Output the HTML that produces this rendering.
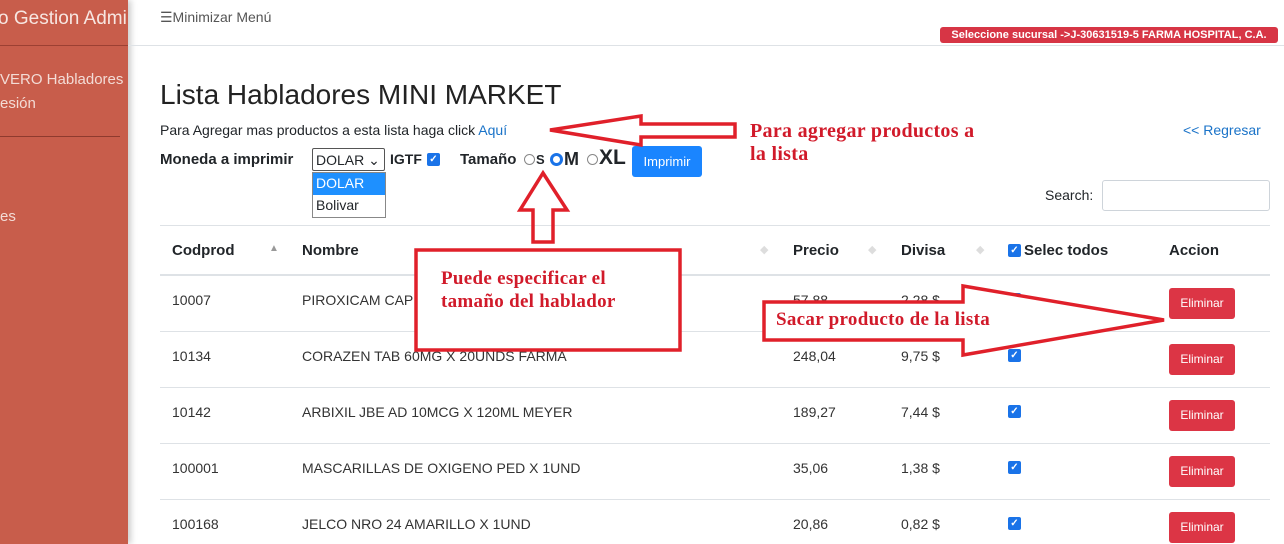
<!DOCTYPE html>
<html><head><meta charset="utf-8"><style>
*{box-sizing:border-box;margin:0;padding:0}
body{width:1284px;height:544px;overflow:hidden;background:#fff;font-family:"Liberation Sans",sans-serif;color:#212529;position:relative}
.a{position:absolute;white-space:nowrap}
#sb{position:absolute;left:0;top:0;width:128px;height:544px;background:#c85d4b;box-shadow:3px 0 6px rgba(0,0,0,.2);overflow:hidden;color:#f3dcd6}
.hl{position:absolute;left:160px;width:1110px;height:1px;background:#dee2e6}
.th{font-weight:bold;font-size:15px;top:242px}
.td{font-size:14px;color:#333}
.btn{position:absolute;left:1169px;width:66px;height:31px;background:#dc3545;color:#fff;font-size:12px;border-radius:3px;text-align:center;line-height:31px}
.cb{position:absolute;width:13px;height:13px;background:#1a73e8;border-radius:2px;color:#fff;font-size:10px;line-height:13px;text-align:center;font-weight:bold}
.red{color:#d11a2a;font-family:"Liberation Serif",serif;font-weight:bold;font-size:20px;letter-spacing:0.3px}
</style></head><body>
<div id="sb">
<div class="a" style="left:-2px;top:8px;font-size:19px;color:#f7e6e1">o Gestion Admin</div>
<div style="position:absolute;left:0;top:45px;width:128px;height:1px;background:#9c4033"></div>
<div class="a" style="left:0;top:71px;font-size:15px">VERO Habladores</div>
<div class="a" style="left:0;top:95px;font-size:15px">esión</div>
<div style="position:absolute;left:0;top:136px;width:120px;height:1px;background:#8e3a2e"></div>
<div class="a" style="left:0;top:208px;font-size:15px">es</div>
</div>
<div class="a" style="left:160px;top:9px;font-size:14px;color:#555">☰Minimizar Menú</div>
<div style="position:absolute;left:128px;top:45px;width:1156px;height:1px;background:#dee2e6"></div>
<div class="a" style="left:940px;top:27px;width:338px;height:16px;background:#d73545;color:#fff;font-size:11px;font-weight:bold;border-radius:3px;text-align:center;line-height:16px;font-family:'Liberation Sans Narrow','Liberation Sans',sans-serif">Seleccione sucursal -&gt;J-30631519-5 FARMA HOSPITAL, C.A.</div>
<div class="a" style="left:160px;top:79px;font-size:28px;color:#222">Lista Habladores MINI MARKET</div>
<div class="a" style="left:160px;top:122px;font-size:14px">Para Agregar mas productos a esta lista haga click <span style="color:#1a73c8">Aquí</span></div>
<div class="a" style="left:1183px;top:122px;font-size:14px;color:#1a73c8">&lt;&lt; Regresar</div>
<div class="a" style="left:160px;top:151px;font-size:15px;font-weight:bold">Moneda a imprimir</div>
<div class="a" style="left:312px;top:148px;width:73px;height:23px;border:1px solid #555;border-radius:2px;font-size:14px;padding:3px 3px">DOLAR ⌄</div>
<div class="a" style="left:312px;top:172px;width:74px;height:46px;border:1px solid #888;background:#fff;font-size:14px"><div style="background:#1e90ff;color:#fff;padding:2px 3px;height:22px">DOLAR</div><div style="padding:2px 3px">Bolivar</div></div>
<div class="a" style="left:390px;top:151px;font-size:14px;font-weight:bold">IGTF</div>
<div class="cb" style="left:427px;top:153px">✓</div>
<div class="a" style="left:460px;top:151px;font-size:15px;font-weight:bold">Tamaño</div>
<div class="a" style="left:524px;top:154px;width:11px;height:11px;border:1px solid #888;border-radius:50%"></div>
<div class="a" style="left:536px;top:152px;font-size:13px;font-weight:bold">S</div>
<div class="a" style="left:550px;top:153px;width:13px;height:13px;border:3px solid #1a73e8;border-radius:50%"></div>
<div class="a" style="left:564px;top:149px;font-size:18px;font-weight:bold">M</div>
<div class="a" style="left:587px;top:154px;width:11px;height:11px;border:1px solid #888;border-radius:50%"></div>
<div class="a" style="left:599px;top:146px;font-size:21px;font-weight:bold">XL</div>
<div class="a" style="left:632px;top:146px;width:70px;height:31px;background:#1a85ff;color:#fff;font-size:13px;border-radius:3px;text-align:center;line-height:31px">Imprimir</div>
<div class="a" style="left:1045px;top:187px;font-size:14px">Search:</div>
<div class="a" style="left:1102px;top:180px;width:168px;height:31px;border:1px solid #ced4da;border-radius:3px"></div>
<div class="hl" style="top:225px"></div>
<div class="a th" style="left:172px">Codprod</div>
<div class="a" style="left:269px;top:243px;font-size:10px;color:#999">▲</div>
<div class="a th" style="left:302px">Nombre</div>
<div class="a" style="left:760px;top:243px;font-size:11px;color:#ddd">◆</div>
<div class="a th" style="left:793px">Precio</div>
<div class="a" style="left:868px;top:243px;font-size:11px;color:#ddd">◆</div>
<div class="a th" style="left:901px">Divisa</div>
<div class="a" style="left:976px;top:243px;font-size:11px;color:#ddd">◆</div>
<div class="cb" style="left:1008px;top:244px">✓</div>
<div class="a th" style="left:1024px">Selec todos</div>
<div class="a th" style="left:1169px">Accion</div>
<div class="hl" style="top:274px;height:2px"></div>

<div class="a td" style="left:172px;top:292px">10007</div><div class="a td" style="left:302px;top:292px">PIROXICAM CAP</div><div class="a td" style="left:793px;top:292px">57,88</div><div class="a td" style="left:901px;top:292px">2,28 $</div><div class="cb" style="left:1008px;top:293px">✓</div><div class="btn" style="top:288px">Eliminar</div>
<div class="hl" style="top:331px"></div>
<div class="a td" style="left:172px;top:348px">10134</div><div class="a td" style="left:302px;top:348px">CORAZEN TAB 60MG X 20UNDS FARMA</div><div class="a td" style="left:793px;top:348px">248,04</div><div class="a td" style="left:901px;top:348px">9,75 $</div><div class="cb" style="left:1008px;top:349px">✓</div><div class="btn" style="top:344px">Eliminar</div>
<div class="hl" style="top:387px"></div>
<div class="a td" style="left:172px;top:404px">10142</div><div class="a td" style="left:302px;top:404px">ARBIXIL JBE AD 10MCG X 120ML MEYER</div><div class="a td" style="left:793px;top:404px">189,27</div><div class="a td" style="left:901px;top:404px">7,44 $</div><div class="cb" style="left:1008px;top:405px">✓</div><div class="btn" style="top:400px">Eliminar</div>
<div class="hl" style="top:443px"></div>
<div class="a td" style="left:172px;top:460px">100001</div><div class="a td" style="left:302px;top:460px">MASCARILLAS DE OXIGENO PED X 1UND</div><div class="a td" style="left:793px;top:460px">35,06</div><div class="a td" style="left:901px;top:460px">1,38 $</div><div class="cb" style="left:1008px;top:461px">✓</div><div class="btn" style="top:456px">Eliminar</div>
<div class="hl" style="top:499px"></div>
<div class="a td" style="left:172px;top:516px">100168</div><div class="a td" style="left:302px;top:516px">JELCO NRO 24 AMARILLO X 1UND</div><div class="a td" style="left:793px;top:516px">20,86</div><div class="a td" style="left:901px;top:516px">0,82 $</div><div class="cb" style="left:1008px;top:517px">✓</div><div class="btn" style="top:512px">Eliminar</div>

<svg class="a" style="left:0;top:0" width="1284" height="544">
<g fill="none" stroke="#e0202a" stroke-width="3.5" stroke-linejoin="miter">
<polygon points="550,130 641,116 641,124 735,124 735,137 641,137 641,145"/>
<polygon points="543,173 567,210 553,210 553,242 533,242 533,210 520,210"/>
<polygon points="764,302 963,302 963,286 1164,320 963,355 963,340 764,340" fill="#fff"/>
</g>
<rect x="416" y="250" width="264" height="100" fill="#fff" stroke="#e0202a" stroke-width="3.5"/>
</svg>
<div class="a red" style="left:750px;top:120px;line-height:23px">Para agregar productos a<br>la lista</div>
<div class="a red" style="left:441px;top:267px;font-size:19px;line-height:23px">Puede especificar el<br>tamaño del hablador</div>
<div class="a red" style="left:776px;top:309px;font-size:19px">Sacar producto de la lista</div>
</body></html>
